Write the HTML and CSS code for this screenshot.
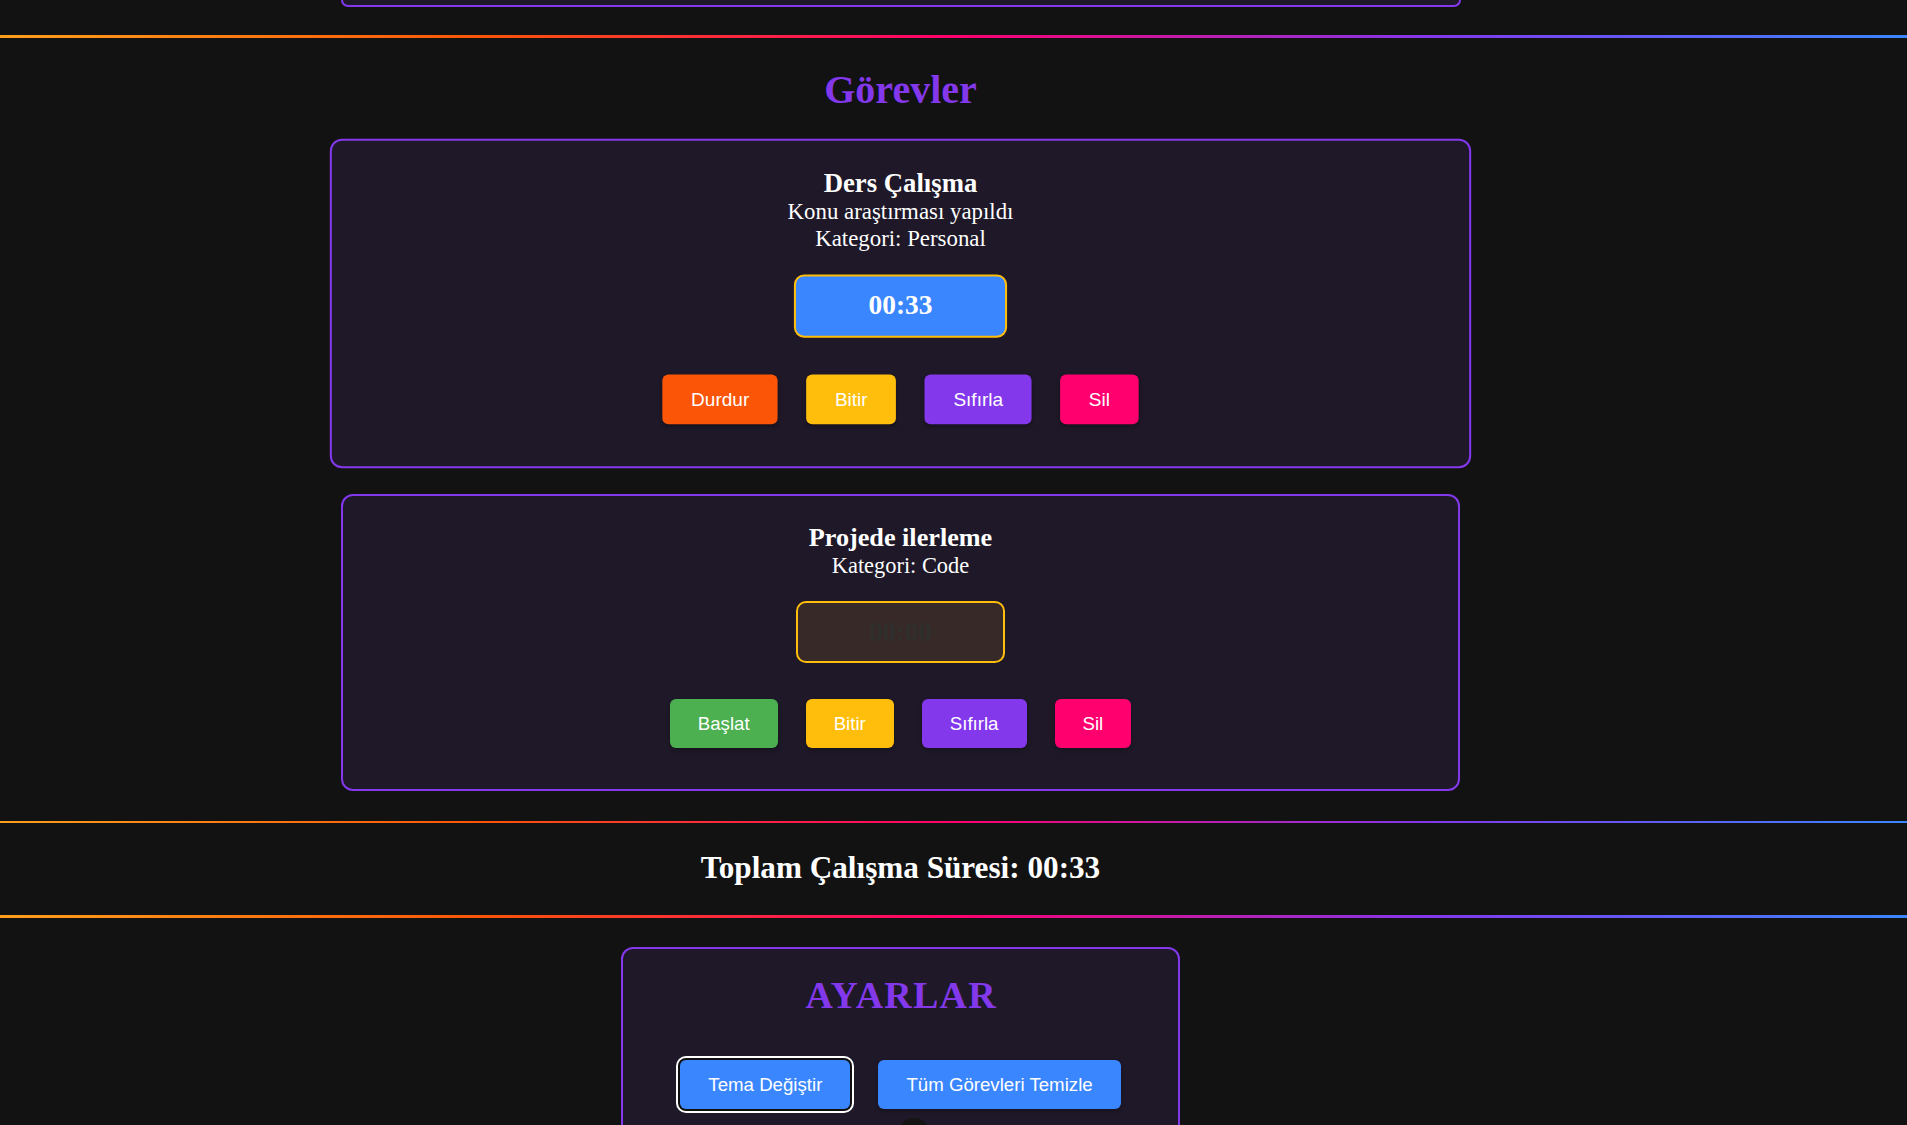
FILE: index.html
```html
<!DOCTYPE html>
<html lang="tr">
<head>
<meta charset="utf-8">
<title>Görevler</title>
<link rel="stylesheet" href="styles.css">
</head>
<body>
  <div class="col">
    <div class="prev-card"></div>
  </div>
  <div class="rule rule-thick"></div>

  <section class="col tasks">
    <h2 class="section-title">Görevler</h2>
    <div class="task-list">
      <div class="task-card is-active">
        <h3 class="task-title">Ders Çalışma</h3>
        <p class="task-text">Konu araştırması yapıldı</p>
        <p class="task-text">Kategori: Personal</p>
        <div class="timer timer-running">00:33</div>
        <div class="actions">
          <button class="btn btn-stop">Durdur</button>
          <button class="btn btn-finish">Bitir</button>
          <button class="btn btn-reset">Sıfırla</button>
          <button class="btn btn-delete">Sil</button>
        </div>
      </div>
      <div class="task-card">
        <h3 class="task-title">Projede ilerleme</h3>
        <p class="task-text">Kategori: Code</p>
        <div class="timer timer-idle">00:00</div>
        <div class="actions">
          <button class="btn btn-start">Başlat</button>
          <button class="btn btn-finish">Bitir</button>
          <button class="btn btn-reset">Sıfırla</button>
          <button class="btn btn-delete">Sil</button>
        </div>
      </div>
    </div>
  </section>

  <div class="rule rule-thin"></div>
  <section class="col total">
    <h2 class="total-title">Toplam Çalışma Süresi: 00:33</h2>
  </section>
  <div class="rule rule-thick"></div>

  <section class="col settings-wrap">
    <div class="settings-card">
      <h2 class="settings-title">AYARLAR</h2>
      <div class="settings-actions">
        <button class="btn btn-blue is-focused">Tema Değiştir</button>
        <button class="btn btn-blue">Tüm Görevleri Temizle</button>
      </div>
      <div class="knob-row"><span class="knob"></span></div>
    </div>
  </section>
</body>
</html>
```
FILE: styles.css
```css
html, body {
  margin: 0;
  padding: 0;
}

body {
  background: #121212;
  color: #ffffff;
  font-family: "Liberation Serif", "Times New Roman", serif;
  width: 1907px;
  overflow: hidden;
}

.col {
  width: 1801px;
  display: flex;
  flex-direction: column;
  align-items: center;
}

.prev-card {
  width: 1116px;
  height: 5px;
  box-sizing: content-box;
  background: #1e1828;
  border: 2px solid #8338ec;
  border-top: none;
  border-radius: 0 0 12px 12px;
}

.rule {
  width: 100%;
  background: linear-gradient(90deg, #ff9f1c 0%, #fb5607 25%, #ff006e 50%, #8338ec 75%, #3a86ff 100%);
}

.rule-thick {
  height: 3px;
  margin-top: 28px;
}

.rule-thin {
  height: 2px;
  margin-top: 29.5px;
}

.tasks {
  padding-top: 28.5px;
}

.section-title {
  margin: 0 0 29px;
  font-size: 40px;
  line-height: 1.15;
  font-weight: bold;
  color: #8338ec;
}

.task-list {
  display: flex;
  flex-direction: column;
  align-items: center;
  gap: 29.5px;
}

.task-card {
  width: 1119px;
  box-sizing: border-box;
  background: #1e1828;
  border: 2px solid #8338ec;
  border-radius: 12px;
  padding: 27px 20px 41px;
  display: flex;
  flex-direction: column;
  align-items: center;
  font-size: 22.4px;
}

.task-card.is-active {
  transform: scale(1.02);
}

.task-title {
  margin: 0;
  font-size: 26.2px;
  line-height: 1.15;
  font-weight: bold;
}

.task-text {
  margin: 0;
  font-size: 22.4px;
  line-height: 1.15;
}

.timer {
  margin-top: 22px;
  width: 209px;
  height: 62px;
  box-sizing: border-box;
  border: 2px solid #ffbe0b;
  border-radius: 10px;
  display: flex;
  align-items: center;
  justify-content: center;
  font-size: 26.88px;
  font-weight: bold;
  line-height: 1.15;
}

.timer-running {
  background: #3a86ff;
  color: #ffffff;
}

.timer-idle {
  background: #372928;
  color: #2f2f2d;
}

.actions {
  margin-top: 36px;
  display: flex;
  gap: 28px;
}

.btn {
  font-family: "Liberation Sans", Arial, sans-serif;
  font-size: 18.67px;
  line-height: 1.15;
  color: #ffffff;
  border: none;
  border-radius: 6px;
  padding: 14px 28px;
  margin: 0;
  cursor: pointer;
  box-shadow: 0 2px 4px rgba(0, 0, 0, 0.25);
}

.btn-stop { background: #fb5607; }
.btn-finish { background: #ffbe0b; }
.btn-reset { background: #8338ec; }
.btn-delete { background: #ff006e; }
.btn-start { background: #4caf50; }
.btn-blue { background: #3a86ff; }

.btn.is-focused {
  box-shadow: 0 0 0 2px #101010, 0 0 0 4px #ffffff;
}

.total {
  padding-top: 27px;
  padding-bottom: 1px;
}

.total-title {
  margin: 0;
  font-size: 31.2px;
  line-height: 1.15;
  font-weight: bold;
  color: #ffffff;
}

.settings-wrap {
  padding-top: 29px;
}

.settings-card {
  width: 559px;
  box-sizing: border-box;
  background: #1e1828;
  border: 2px solid #8338ec;
  border-radius: 12px;
  padding: 25.6px 20px 30px;
  display: flex;
  flex-direction: column;
  align-items: center;
}

.settings-title {
  margin: 0;
  font-size: 38px;
  line-height: 1.15;
  font-weight: bold;
  letter-spacing: 1.2px;
  text-indent: 1.2px;
  color: #8338ec;
}

.settings-actions {
  margin-top: 41.7px;
  display: flex;
  gap: 28px;
}

.knob-row {
  margin-top: 8.5px;
  display: flex;
  justify-content: center;
  width: 100%;
}

.knob {
  width: 32px;
  height: 32px;
  border-radius: 50%;
  background: #141414;
  margin-left: 26px;
}
```
